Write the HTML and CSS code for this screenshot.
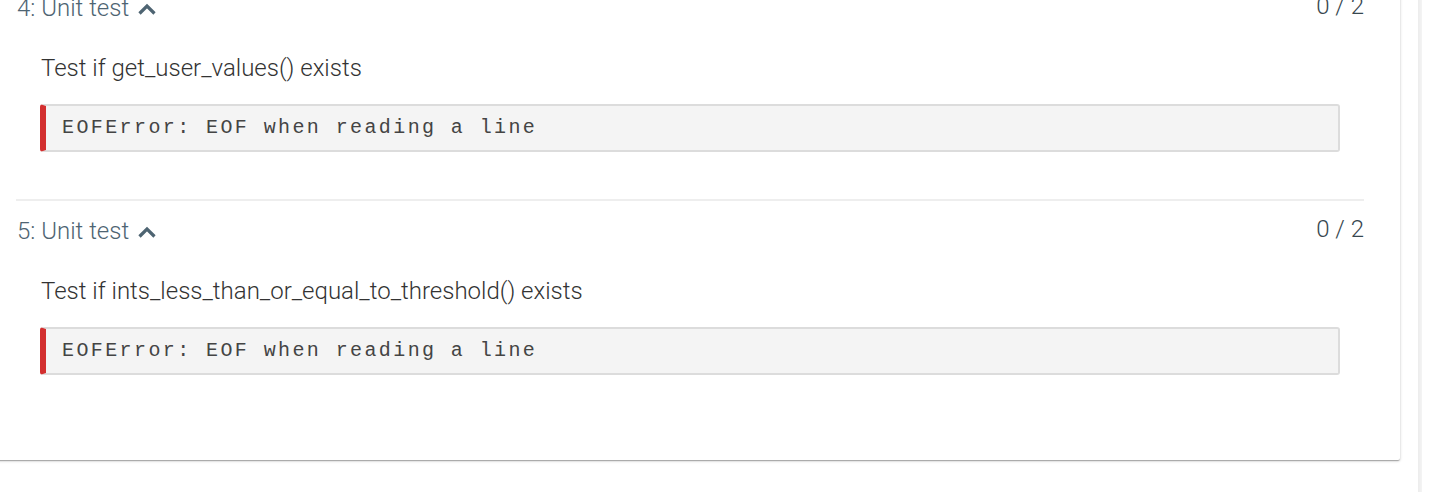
FILE: index.html
```html
<!DOCTYPE html>
<html>
<head>
<meta charset="utf-8">
<link rel="stylesheet" href="styles.css">
</head>
<body>
<div class="page">
  <div class="card">
    <section class="test">
      <div class="test-head">
        <div class="test-title">4: Unit test
          <svg class="chev" viewBox="0 0 18 12" width="18" height="12"><polyline points="1.5,10.5 9,3 16.5,10.5"/></svg>
        </div>
        <div class="score">0 / 2</div>
      </div>
      <div class="test-body">
        <p class="desc">Test if get_user_values() exists</p>
        <pre class="error">EOFError: EOF when reading a line</pre>
      </div>
    </section>
    <section class="test">
      <div class="test-head">
        <div class="test-title">5: Unit test
          <svg class="chev" viewBox="0 0 18 12" width="18" height="12"><polyline points="1.5,10.5 9,3 16.5,10.5"/></svg>
        </div>
        <div class="score">0 / 2</div>
      </div>
      <div class="test-body">
        <p class="desc">Test if ints_less_than_or_equal_to_threshold() exists</p>
        <pre class="error">EOFError: EOF when reading a line</pre>
      </div>
    </section>
  </div>
  <div class="rail"></div>
</div>
</body>
</html>
```
FILE: styles.css
```css
html, body {
  margin: 0;
  padding: 0;
  background: #fff;
  overflow: hidden;
}
body {
  font-family: Roboto, "Noto Sans", sans-serif;
  height: 492px;
}
.page {
  display: flex;
  align-items: flex-start;
  height: 492px;
}
.card {
  width: 1410px;
  margin-left: -10px;
  margin-top: -32px;
  flex: none;
  background: #fff;
  box-shadow: 0 1px 3px rgba(0,0,0,.22), 0 1px 1px rgba(0,0,0,.14), 0 2px 1px -1px rgba(0,0,0,.12);
  border-radius: 2px;
  padding: 20px 36px 85px 26px;
  box-sizing: border-box;
}
.test + .test {
  border-top: 2px solid #eee;
  margin-top: 47px;
  padding-top: 10px;
}
.test-head {
  display: flex;
  justify-content: space-between;
  align-items: center;
  height: 40px;
}
.test-title {
  display: flex;
  align-items: center;
  font-size: 24px;
  font-weight: 300;
  line-height: 40px;
  color: #4e6472;
  margin-left: 1px;
}
.chev {
  fill: none;
  stroke: #4e6472;
  stroke-width: 3.2;
  margin-left: 9px;
  margin-top: 2px;
}
.score {
  font-size: 24px;
  font-weight: 300;
  line-height: 40px;
  color: #37474f;
  margin-top: -4px;
}
.test-body {
  padding: 0 24px;
}
.desc {
  margin: 24px 0 0 1px;
  font-size: 24px;
  font-weight: 300;
  color: #333;
  line-height: 32px;
}
.error {
  margin: 20px 0 0 0;
  height: 48px;
  box-sizing: border-box;
  background: #f4f4f4;
  border: 2px solid #dcdcdc;
  border-left: 6px solid #d32f2f;
  border-radius: 3px;
  padding: 0 0 0 16px;
  font-family: "Courier New", "Liberation Mono", monospace;
  font-size: 20px;
  letter-spacing: 2.4px;
  line-height: 44px;
  color: #444;
}
.rail {
  width: 4px;
  height: 492px;
  margin-left: 18px;
  background: linear-gradient(to right, #ececec, #f4f4f4);
  flex: none;
}
```
